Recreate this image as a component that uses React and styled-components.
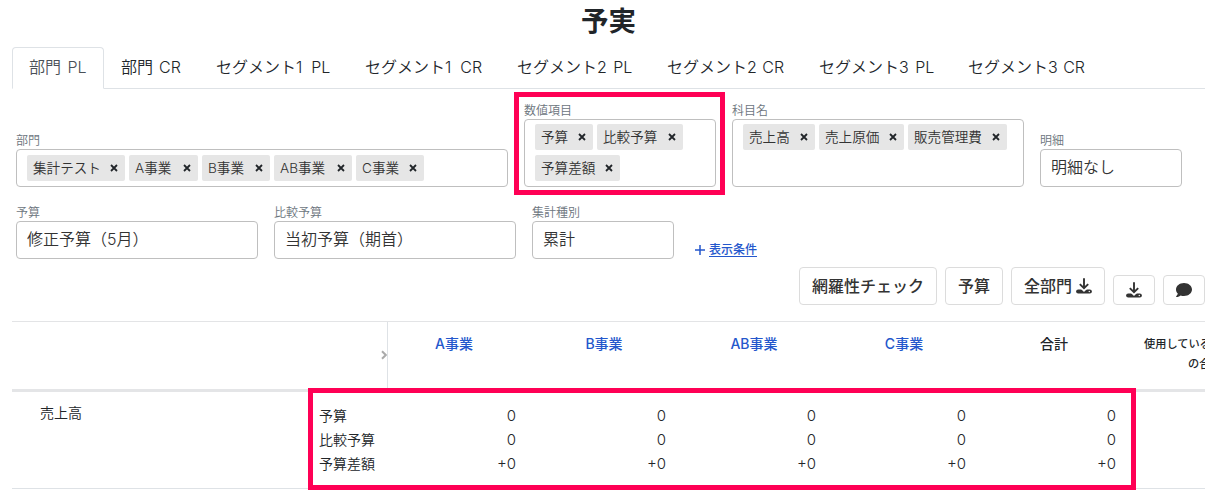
import React from "react";
import styled, { createGlobalStyle } from "styled-components";

const Global = createGlobalStyle`
  *, *::before, *::after { box-sizing: border-box; }
  html, body { margin: 0; background: #fff; overflow: hidden; }
  body {
    font-family: Inter, "Noto Sans CJK JP", sans-serif;
    font-size: 16px;
    font-weight: 350;
    line-height: 24px;
    color: #212529;
  }
`;

const Page = styled.main`
  width: 1217px;
  height: 496px;
  padding: 0 12px;
  overflow: hidden;
`;

const Title = styled.h1`
  margin: 0;
  height: 47px;
  padding-top: 3px;
  font-size: 27.5px;
  line-height: 36px;
  font-weight: 700;
  text-align: center;
`;

const Tabs = styled.nav`
  display: flex;
  height: 42px;
  border-bottom: 1px solid #dee2e6;
`;

const Tab = styled.a`
  width: ${(p) => p.$width}px;
  height: 42px;
  padding: 7px 0 0 16px;
  border: 1px solid ${(p) => (p.$active ? "#dee2e6" : "transparent")};
  border-bottom-color: ${(p) => (p.$active ? "#fff" : "transparent")};
  border-radius: 4px 4px 0 0;
  color: ${(p) => (p.$active ? "#495057" : "#212529")};
  white-space: nowrap;
  word-spacing: ${(p) => p.$space}px;
`;

const Filters = styled.section`
  display: flex;
  align-items: flex-end;
  gap: 16px;
  height: ${(p) => p.$height}px;
  padding-left: 4px;
`;

const Field = styled.div`
  position: relative;
  width: ${(p) => p.$width}px;
`;

const Label = styled.div`
  height: 18px;
  font-size: 12px;
  line-height: 20px;
  color: #6c757d;
`;

const Box = styled.div`
  display: flex;
  flex-wrap: wrap;
  align-content: flex-start;
  gap: 5px 4px;
  height: ${(p) => (p.$tall ? 68 : 38)}px;
  padding: ${(p) => (p.$tall ? 4 : 5)}px 10px 0;
  border: 1px solid #bfbfbf;
  border-radius: 4px;
  color: #333;
  line-height: 25px;
`;

const Chip = styled.span`
  display: flex;
  align-items: center;
  justify-content: space-between;
  width: ${(p) => p.$width}px;
  height: 26px;
  padding: 0 7px 0 6px;
  border-radius: 2px;
  background: #e6e6e6;
  font-size: 13.6px;
  line-height: 27px;
  white-space: nowrap;
`;

const Highlight = styled.div`
  position: absolute;
  inset: ${(p) => p.$inset};
  border: 5px solid #ff0055;
  pointer-events: none;
  z-index: 1;
`;

const ConditionLink = styled.a`
  display: flex;
  align-items: center;
  gap: 4px;
  height: 18px;
  margin-left: 5px;
  color: #2457cc;
  font-size: 12px;
  font-weight: 500;
  line-height: 18px;
  span { text-decoration: underline; text-underline-offset: 2px; }
`;

const Toolbar = styled.div`
  display: flex;
  justify-content: flex-end;
  align-items: flex-end;
  gap: 8px;
  height: 46px;
  margin-bottom: 16px;
`;

const Button = styled.button`
  display: flex;
  align-items: center;
  justify-content: center;
  gap: 4px;
  width: ${(p) => p.$width}px;
  height: ${(p) => (p.$small ? 30 : 38)}px;
  padding: 0 0 ${(p) => (p.$small ? 0 : 2)}px;
  border: 1px solid #dcdcdc;
  border-radius: 4px;
  background: #fff;
  color: #333;
  font: 500 16px/24px "Noto Sans CJK JP", sans-serif;
  white-space: nowrap;
  svg { position: relative; top: ${(p) => (p.$small ? 0 : 1)}px; }
`;

const Table = styled.section`
  position: relative;
  border-top: 1px solid #e3e4e6;
`;

const HeadRow = styled.div`
  display: flex;
  height: 70px;
  overflow: hidden;
  border-bottom: 3px solid #e4e5e7;
`;

const Corner = styled.div`
  display: flex;
  flex: none;
  align-items: center;
  justify-content: flex-end;
  width: 376px;
  margin-right: -9px;
  padding-bottom: 1px;
  border-right: 1px solid #dee2e6;
`;

const HeadCell = styled.div`
  flex: none;
  width: 150px;
  padding-top: 12px;
  font-size: 14px;
  line-height: 20px;
  font-weight: 500;
  text-align: center;
  color: ${(p) => (p.$link ? "#2457cc" : "#212529")};
`;

const NoteHead = styled.div`
  flex: none;
  width: 76px;
  padding: 12px 0 0 15px;
  overflow: hidden;
  font-size: 11.2px;
  line-height: 20px;
  font-weight: 500;
  white-space: nowrap;
  div + div { padding-left: 44px; }
`;

const BodyRow = styled.div`
  display: flex;
  height: 97px;
  border-bottom: 1px solid #dee2e6;
  font-size: 14px;
`;

const Account = styled.div`
  width: 296px;
  padding: 9px 0 0 28px;
`;

const Metrics = styled.div`
  width: ${(p) => p.$width}px;
  padding: ${(p) => (p.$label ? "12px 0 0 11px" : "12px 13px 0 0")};
  text-align: ${(p) => (p.$label ? "left" : "right")};
  font-size: ${(p) => (p.$label ? 14 : 15)}px;
  white-space: nowrap;
`;

const CloseIcon = () => (
  <svg width="8" height="8" viewBox="0 0 8 8" fill="none" stroke="#212529" strokeWidth="1.8">
    <path d="M1 1l6 6M7 1L1 7" />
  </svg>
);

const DownloadIcon = () => (
  <svg width="16" height="16" viewBox="0 0 16 16" fill="none" stroke="#333">
    <path d="M2.2 13.500h11.600" strokeWidth="4.200" strokeLinecap="round" />
    <path d="M5.200 9.300L8 12l2.800-2.700" stroke="#fff" strokeWidth="2.800" />
    <path d="M8 0.300v9.700M3.800 6.100l4.200 4 4.200-4" strokeWidth="1.900" />
    <circle cx="13.300" cy="13.500" r="0.700" fill="#fff" stroke="none" />
  </svg>
);

const CommentIcon = () => (
  <svg width="16" height="16" viewBox="0 0 512 512" fill="#333">
    <path d="M256 32C114.600 32 0 125.100 0 240c0 49.600 21.400 95 57 130.700C44.500 421.100 2.700 466 2.200 466.500c-2.200 2.300-2.800 5.700-1.500 8.700S4.800 480 8 480c66.300 0 116-31.800 140.600-51.400 32.700 12.300 69 19.400 107.400 19.400 141.400 0 256-93.100 256-208S397.400 32 256 32z" />
  </svg>
);

const ChevronIcon = () => (
  <svg width="6" height="10" viewBox="0 0 6 10" fill="none" stroke="#aaa" strokeWidth="2">
    <path d="M1 1.200L4.800 5 1 8.800" />
  </svg>
);

const PlusIcon = () => (
  <svg width="10" height="10" viewBox="0 0 10 10" fill="none" stroke="#2457cc" strokeWidth="1.5">
    <path d="M5 0v10M0 5h10" />
  </svg>
);

const tabs = [
  ["部門 PL", 92, 2], ["部門 CR", 95, 1.5], ["セグメント1 PL", 149, 4.5], ["セグメント1 CR", 152, 4.5],
  ["セグメント2 PL", 150, 2], ["セグメント2 CR", 152, 1], ["セグメント3 PL", 149, 2], ["セグメント3 CR", 152, 1],
];

const divisions = ["A事業", "B事業", "AB事業", "C事業"];

const MultiSelect = ({ label, width, tall, chips, children }) => (
  <Field $width={width}>
    <Label>{label}</Label>
    <Box $tall={tall}>
      {chips.map(([text, w]) => (
        <Chip key={text} $width={w}>{text}<CloseIcon /></Chip>
      ))}
    </Box>
    {children}
  </Field>
);

const Select = ({ label, width, value }) => (
  <Field $width={width}>
    <Label>{label}</Label>
    <Box>{value}</Box>
  </Field>
);

export default function App() {
  return (
    <Page>
      <Global />
      <Title>予実</Title>
      <Tabs>
        {tabs.map(([text, w, space], i) => (
          <Tab key={text} $width={w} $space={space} $active={i === 0}>{text}</Tab>
        ))}
      </Tabs>
      <Filters $height={98}>
        <MultiSelect label="部門" width={492}
          chips={[["集計テスト", 98], ["A事業", 69], ["B事業", 68], ["AB事業", 78], ["C事業", 68]]} />
        <MultiSelect label="数値項目" width={192} tall
          chips={[["予算", 58], ["比較予算", 86], ["予算差額", 85]]}>
          <Highlight $inset="-9px -9px -8px -10px" />
        </MultiSelect>
        <MultiSelect label="科目名" width={292} tall
          chips={[["売上高", 72], ["売上原価", 85], ["販売管理費", 99]]} />
        <Select label="明細" width={142} value="明細なし" />
      </Filters>
      <Filters $height={72}>
        <Select label="予算" width={242} value="修正予算（5月）" />
        <Select label="比較予算" width={242} value="当初予算（期首）" />
        <Select label="集計種別" width={142} value="累計" />
        <ConditionLink><PlusIcon /><span>表示条件</span></ConditionLink>
      </Filters>
      <Toolbar>
        <Button $width={138}>網羅性チェック</Button>
        <Button $width={58}>予算</Button>
        <Button $width={94}>全部門<DownloadIcon /></Button>
        <Button $width={42} $small><DownloadIcon /></Button>
        <Button $width={42} $small><CommentIcon /></Button>
      </Toolbar>
      <Table>
        <HeadRow>
          <Corner><ChevronIcon /></Corner>
          {divisions.map((d) => <HeadCell key={d} $link>{d}</HeadCell>)}
          <HeadCell>合計</HeadCell>
          <NoteHead><div>使用している</div><div>の合</div></NoteHead>
        </HeadRow>
        <BodyRow>
          <Account>売上高</Account>
          <Metrics $label $width={71}>
            <div>予算</div><div>比較予算</div><div>予算差額</div>
          </Metrics>
          {[...divisions, "合計"].map((d) => (
            <Metrics key={d} $width={150}>
              <div>0</div><div>0</div><div>+0</div>
            </Metrics>
          ))}
        </BodyRow>
        <Highlight $inset="66px 69px -1px 296px" />
      </Table>
    </Page>
  );
}
